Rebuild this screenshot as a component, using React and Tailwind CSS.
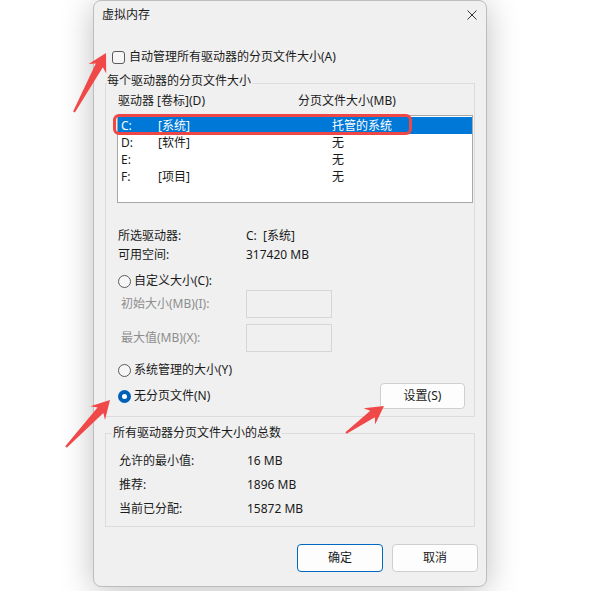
import React from "react";

function Radio({ checked }) {
  return checked ? (
    <span className="w-[13px] h-[13px] rounded-full bg-[#005fb8] flex items-center justify-center shrink-0">
      <span className="w-[5px] h-[5px] rounded-full bg-white" />
    </span>
  ) : (
    <span className="w-[13px] h-[13px] rounded-full border border-[#5a5a5a] bg-[#f6f6f6] shrink-0" />
  );
}

function Arrow({ x, y, tx, ty }) {
  const dx = tx - x;
  const dy = ty - y;
  const L = Math.sqrt(dx * dx + dy * dy);
  const a = (Math.atan2(dy, dx) * 180) / Math.PI;
  const pts = [
    [0, -1],
    [L - 14, -4],
    [L - 18, -10],
    [L, 0],
    [L - 18, 10],
    [L - 14, 4],
    [0, 1],
  ]
    .map((p) => p.join(","))
    .join(" ");
  return (
    <polygon
      points={pts}
      fill="#f04848"
      transform={`translate(${x} ${y}) rotate(${a})`}
    />
  );
}

export default function App() {
  return (
    <div className="relative w-[600px] h-[591px] overflow-hidden bg-white text-[12px] leading-[16px] text-[#1a1a1a] font-['Noto_Sans','Noto_Sans_CJK_SC',sans-serif]">
      <div className="ml-[93px] w-[394px] h-[587px] bg-[#f0f0f0] rounded-[8px] border border-[#bdbdbd] shadow-[0_4px_32px_rgba(0,0,0,0.25)] flex flex-col">
        {/* title bar */}
        <div className="h-[27px] flex items-center justify-between pl-[8px] pr-[9px]">
          <span>虚拟内存</span>
          <svg width="10" height="10" viewBox="0 0 10 10">
            <path d="M0.5 0.5 L9.5 9.5 M9.5 0.5 L0.5 9.5" stroke="#333" strokeWidth="1" />
          </svg>
        </div>

        {/* auto manage checkbox */}
        <div className="mt-[21px] h-[16px] flex items-center pl-[18px] gap-[4px]">
          <span className="w-[13px] h-[13px] rounded-[3px] border border-[#5a5a5a] bg-[#f6f6f6]" />
          <span>自动管理所有驱动器的分页文件大小(A)</span>
        </div>

        {/* group 1 */}
        <div className="relative mt-[18px] ml-[11px] w-[370px] border border-[#dcdcdc] pb-[7px]">
          <span className="absolute left-[1px] top-[-11px] bg-[#f0f0f0] pr-[2px]">每个驱动器的分页文件大小</span>
          <div className="mt-[9px] h-[16px] flex pl-[12px]">
            <span className="w-[180px]">驱动器 [卷标](D)</span>
            <span>分页文件大小(MB)</span>
          </div>
          <div className="relative mt-[6px] ml-[11px] w-[356px] h-[88px] bg-white border border-[#a7a7a7] pt-[1px]">
            <div className="h-[17px] flex items-center bg-[#0078d7] text-white pl-[3px]">
              <span className="w-[37px]">C:</span>
              <span className="w-[174px]">[系统]</span>
              <span>托管的系统</span>
            </div>
            <div className="h-[17px] flex items-center pl-[3px]">
              <span className="w-[37px]">D:</span>
              <span className="w-[174px]">[软件]</span>
              <span>无</span>
            </div>
            <div className="h-[17px] flex items-center pl-[3px]">
              <span className="w-[37px]">E:</span>
              <span className="w-[174px]"></span>
              <span>无</span>
            </div>
            <div className="h-[17px] flex items-center pl-[3px]">
              <span className="w-[37px]">F:</span>
              <span className="w-[174px]">[项目]</span>
              <span>无</span>
            </div>
            <div className="absolute left-[-5px] top-[-2px] w-[299px] h-[21px] border-[3px] border-[#ef4646] rounded-[6px]" />
          </div>

          <div className="mt-[23px] pl-[12px]">
            <div className="h-[19px] flex items-center">
              <span className="w-[128px]">所选驱动器:</span>
              <span>C:&nbsp;&nbsp;[系统]</span>
            </div>
            <div className="h-[19px] flex items-center">
              <span className="w-[128px]">可用空间:</span>
              <span>317420 MB</span>
            </div>
          </div>

          <div className="mt-[8px] h-[18px] flex items-center pl-[12px] gap-[3px]">
            <Radio />
            <span>自定义大小(C):</span>
          </div>
          <div className="h-[28px] flex items-center pl-[15px]">
            <span className="w-[125px] text-[#8d8d8d]">初始大小(MB)(I):</span>
            <div className="w-[86px] h-[28px] border border-[#d6d6d6] bg-[#f0f0f0]" />
          </div>
          <div className="mt-[6px] h-[28px] flex items-center pl-[15px]">
            <span className="w-[125px] text-[#8d8d8d]">最大值(MB)(X):</span>
            <div className="w-[86px] h-[28px] border border-[#d6d6d6] bg-[#f0f0f0]" />
          </div>

          <div className="mt-[9px] h-[18px] flex items-center pl-[12px] gap-[3px]">
            <Radio />
            <span>系统管理的大小(Y)</span>
          </div>
          <div className="mt-[4px] h-[26px] flex items-center justify-between pl-[12px] pr-[9px]">
            <div className="flex items-center gap-[3px]">
              <Radio checked />
              <span>无分页文件(N)</span>
            </div>
            <button className="w-[85px] h-[26px] rounded-[4px] border border-[#cfcfcf] bg-[#fdfdfd] flex items-center justify-center">
              设置(S)
            </button>
          </div>
        </div>

        {/* group 2 */}
        <div className="relative mt-[16px] ml-[11px] w-[370px] border border-[#dcdcdc] pt-[15px] pb-[5px]">
          <span className="absolute left-[6px] top-[-9px] bg-[#f0f0f0] px-[1px]">所有驱动器分页文件大小的总数</span>
          <div className="pl-[13px]">
            <div className="h-[24px] flex items-center">
              <span className="w-[128px]">允许的最小值:</span>
              <span>16 MB</span>
            </div>
            <div className="h-[24px] flex items-center">
              <span className="w-[128px]">推荐:</span>
              <span>1896 MB</span>
            </div>
            <div className="h-[24px] flex items-center">
              <span className="w-[128px]">当前已分配:</span>
              <span>15872 MB</span>
            </div>
          </div>
        </div>

        {/* buttons */}
        <div className="mt-[17px] flex justify-end gap-[9px] pr-[8px]">
          <button className="w-[86px] h-[28px] rounded-[4px] border border-[#0067c0] bg-[#fdfdfd] flex items-center justify-center">
            确定
          </button>
          <button className="w-[86px] h-[28px] rounded-[4px] border border-[#cfcfcf] bg-[#fdfdfd] flex items-center justify-center">
            取消
          </button>
        </div>
      </div>

      <svg className="absolute left-0 top-0 pointer-events-none" width="600" height="591">
        <Arrow x={74} y={112} tx={106} ty={53} />
        <Arrow x={66} y={447} tx={110} ty={400} />
        <Arrow x={346} y={433} tx={384} ty={406} />
      </svg>
    </div>
  );
}
